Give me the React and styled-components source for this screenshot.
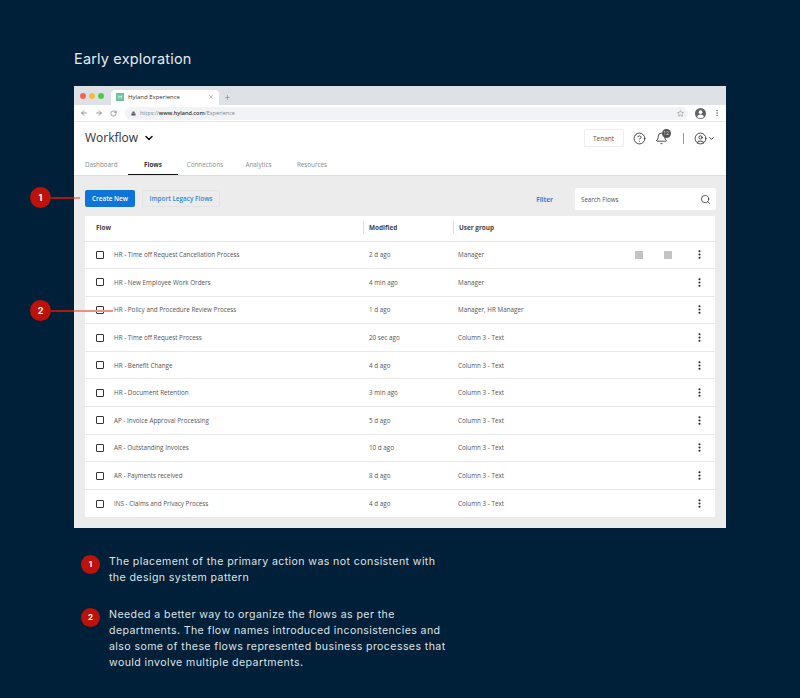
import React from 'react';
import styled, { createGlobalStyle } from 'styled-components';
import { ArrowLeft, ArrowRight, RotateCw, Lock, Star, EllipsisVertical, X, Plus, ChevronDown, CircleHelp, Bell, Search, CircleUser, MoreVertical } from 'lucide-react';

const Global = createGlobalStyle`
  html, body { margin: 0; padding: 0; background: #001f38; }
  body { font-family: "Open Sans", sans-serif; }
  * { box-sizing: border-box; }
`;

const Page = styled.div`
  position: relative;
  width: 800px;
  height: 698px;
  padding: 49px 74px 0;
  background: #001f38;
  overflow: hidden;
`;

const Heading = styled.h1`
  margin: 0 0 17px;
  height: 20px;
  font: 400 14.5px/20px Inter, sans-serif;
  letter-spacing: 0.17px;
  color: #e6eaed;
`;

const Window = styled.div`
  width: 652px;
  height: 442px;
  display: flex;
  flex-direction: column;
  background: #ececec;
`;

const TabStrip = styled.div`
  flex: none;
  height: 19px;
  display: flex;
  align-items: flex-end;
  background: #dee1e6;
  padding-left: 6px;
`;

const Dots = styled.div`
  display: flex;
  gap: 3px;
  align-self: center;
  margin-right: 7px;
`;

const Dot = styled.span`
  width: 6px;
  height: 6px;
  border-radius: 50%;
  background: ${p => p.$color};
`;

const BrowserTab = styled.div`
  width: 108px;
  height: 15.5px;
  display: flex;
  align-items: center;
  padding: 0 5px;
  background: #fff;
  border-radius: 4px 4px 0 0;
  font-size: 6px;
  color: #333;
`;

const Favicon = styled.span`
  width: 8px;
  height: 8px;
  margin-right: 4px;
  background: #6fbf9b;
  color: #fff;
  font-size: 6px;
  line-height: 8px;
  text-align: center;
`;

const TabName = styled.span`
  flex: 1;
`;

const NewTab = styled.span`
  display: flex;
  align-self: center;
  margin: 3px 0 0 5px;
  color: #7d8186;
`;

const AddressBar = styled.div`
  flex: none;
  height: 17px;
  display: flex;
  align-items: center;
  gap: 7px;
  padding: 0 5px 0 6px;
  background: #fff;
  border-bottom: 1px solid #e8e8e8;
  color: #5f6368;
`;

const Url = styled.div`
  flex: 1;
  height: 13px;
  display: flex;
  align-items: center;
  gap: 4px;
  padding: 0 4px 0 6px;
  margin-left: 1px;
  border-radius: 7px;
  background: #f1f3f4;
  font-size: 5.5px;
  color: #80868b;
`;

const UrlText = styled.span`
  flex: 1;
  b { color: #333; font-weight: 600; }
`;

const AppHeader = styled.header`
  flex: none;
  height: 54px;
  padding: 0 11px;
  display: flex;
  flex-direction: column;
  background: #fff;
  border-bottom: 1px solid #dcdcdc;
`;

const TopRow = styled.div`
  height: 32px;
  display: flex;
  align-items: center;
`;

const AppTitle = styled.div`
  display: flex;
  align-items: center;
  gap: 5px;
  flex: 1;
  font: 400 12px/1 "Open Sans", sans-serif;
  color: #333;
`;

const Tenant = styled.div`
  width: 40px;
  height: 18px;
  margin-right: 9px;
  display: flex;
  align-items: center;
  justify-content: center;
  border: 1px solid #eee;
  border-radius: 2px;
  font-size: 6.5px;
  color: #555;
`;

const IconSlot = styled.span`
  position: relative;
  display: flex;
  margin-right: ${p => p.$gap || 0}px;
  color: #222;
`;

const Badge = styled.span`
  position: absolute;
  top: -3px;
  right: -3px;
  width: 9px;
  height: 9px;
  border-radius: 50%;
  background: #555;
  color: #ddd;
  font-size: 5px;
  line-height: 9px;
  text-align: center;
`;

const Divider = styled.span`
  width: 1px;
  height: 11px;
  margin-right: 10px;
  background: #999;
`;

const Tabs = styled.nav`
  margin-top: auto;
  display: flex;
  height: 21px;
`;

const Tab = styled.div`
  width: ${p => p.$w}px;
  display: flex;
  align-items: center;
  justify-content: ${p => (p.$first ? 'flex-start' : 'center')};
  font-size: 6.3px;
  font-weight: ${p => (p.$active ? 700 : 400)};
  color: ${p => (p.$active ? '#333' : '#8b8b8b')};
  border-bottom: 1px solid ${p => (p.$active ? '#111' : 'transparent')};
`;

const Content = styled.main`
  flex: 1;
  padding: 11px 11px 0;
  display: flex;
  flex-direction: column;
`;

const Toolbar = styled.div`
  flex: none;
  height: 22px;
  margin-bottom: 7px;
  display: flex;
  align-items: center;
`;

const Primary = styled.div`
  width: 50px;
  height: 17px;
  margin-right: 7px;
  display: flex;
  align-items: center;
  justify-content: center;
  border-radius: 2px;
  background: #0f74d8;
  color: #fff;
  font-size: 6.4px;
  font-weight: 600;
`;

const Secondary = styled.div`
  width: 78px;
  height: 17px;
  display: flex;
  align-items: center;
  justify-content: center;
  border: 1px solid #e4e4e4;
  border-radius: 2px;
  color: #2f86dd;
  font-size: 6.4px;
  font-weight: 600;
`;

const Filter = styled.div`
  margin-left: auto;
  margin-right: 22px;
  padding-top: 3px;
  color: #2f86dd;
  font-size: 6.4px;
  font-weight: 700;
`;

const SearchBox = styled.div`
  width: 141px;
  height: 22px;
  margin: 2px -1px 0 0;
  display: flex;
  align-items: center;
  justify-content: space-between;
  padding: 0 5px 0 6px;
  background: #fff;
  border-radius: 2px;
  font-size: 6.2px;
  color: #555;
`;

const Table = styled.div`
  background: #fff;
`;

const HeadRow = styled.div`
  height: 25.5px;
  padding-bottom: 1px;
  display: grid;
  grid-template-columns: 278px 90px 1fr;
  align-items: center;
  font-size: 6.4px;
  font-weight: 700;
  color: #444;
  border-bottom: 1px solid #e6e6e6;
`;

const HeadCell = styled.div`
  height: 13px;
  line-height: 13px;
  padding-left: ${p => p.$pad}px;
  border-left: ${p => (p.$line ? '1px solid #ddd' : 'none')};
`;

const Row = styled.div`
  height: 27.6px;
  display: grid;
  grid-template-columns: 29px 250px 89px 1fr 29px 29px 22px;
  align-items: center;
  font-size: 6.3px;
  color: #555;
  border-bottom: ${p => (p.$last ? 'none' : '1px solid #e8e8e8')};
`;

const Check = styled.span`
  width: 8px;
  height: 8px;
  margin-left: 11px;
  border: 1px solid #333;
  border-radius: 1px;
`;

const Cell = styled.span`
  padding-left: ${p => p.$pad || 0}px;
`;

const Placeholder = styled.span`
  width: 8px;
  height: 8px;
  background: ${p => (p.$show ? '#c4c4c4' : 'transparent')};
`;

const Kebab = styled.span`
  display: flex;
  color: #222;
  margin-left: 0.5px;
`;

const Marker = styled.div`
  position: absolute;
  left: 30px;
  top: ${p => p.$top}px;
  width: ${p => p.$len}px;
  height: 21px;
  display: flex;
  align-items: center;
`;

const MarkerDot = styled.span`
  flex: none;
  width: 21px;
  height: 21px;
  border-radius: 50%;
  background: #bd1208;
  color: #fff;
  font: 700 9px/21px Inter, sans-serif;
  text-align: center;
`;

const MarkerLine = styled.span`
  flex: 1;
  height: 2px;
  background: linear-gradient(to right, #a51a12 0, #a51a12 23px, #ee8f88 23px);
`;

const Notes = styled.section`
  margin: 26px 0 0 7px;
  display: flex;
  flex-direction: column;
  gap: 20.5px;
`;

const Note = styled.div`
  display: flex;
  gap: 9px;
`;

const NoteDot = styled.span`
  flex: none;
  width: 19px;
  height: 19px;
  margin-top: 1px;
  border-radius: 50%;
  background: #bd1208;
  color: #fff;
  font: 700 8px/19px Inter, sans-serif;
  text-align: center;
`;

const NoteText = styled.p`
  margin: 0;
  width: 340px;
  font: 400 10.6px/16px Inter, sans-serif;
  letter-spacing: 0.4px;
  color: #dfe3e6;
`;

const rows = [
  ['HR - Time off Request Cancellation Process', '2 d ago', 'Manager'],
  ['HR - New Employee Work Orders', '4 min ago', 'Manager'],
  ['HR - Policy and Procedure Review Process', '1 d ago', 'Manager, HR Manager'],
  ['HR - Time off Request Process', '20 sec ago', 'Column 3 - Text'],
  ['HR - Benefit Change', '4 d ago', 'Column 3 - Text'],
  ['HR - Document Retention', '3 min ago', 'Column 3 - Text'],
  ['AP - Invoice Approval Processing', '5 d ago', 'Column 3 - Text'],
  ['AR - Outstanding Invoices', '10 d ago', 'Column 3 - Text'],
  ['AR - Payments received', '8 d ago', 'Column 3 - Text'],
  ['INS - Claims and Privacy Process', '4 d ago', 'Column 3 - Text'],
];

const tabs = [
  ['Dashboard', 43],
  ['Flows', 50],
  ['Connections', 54],
  ['Analytics', 53],
  ['Resources', 54],
];

// chrome's filled profile avatar
function ProfileIcon() {
  return (
    <svg width="11" height="11" viewBox="0 0 24 24">
      <circle cx="12" cy="12" r="12" fill="#5f6368" />
      <circle cx="12" cy="9" r="4" fill="#fff" />
      <path d="M4.5 19c1.5-3.5 4.500-5 7.500-5s6 1.500 7.500 5a11 11 0 0 1-15 0z" fill="#fff" />
    </svg>
  );
}

export default function App() {
  return (
    <Page>
      <Global />
      <Heading>Early exploration</Heading>
      <Window>
        <TabStrip>
          <Dots>
            <Dot $color="#f4605a" />
            <Dot $color="#f6bd3a" />
            <Dot $color="#4fc84a" />
          </Dots>
          <BrowserTab>
            <Favicon>H</Favicon>
            <TabName>Hyland Experience</TabName>
            <X size={6} color="#777" />
          </BrowserTab>
          <NewTab><Plus size={7} /></NewTab>
        </TabStrip>
        <AddressBar>
          <ArrowLeft size={8} />
          <ArrowRight size={8} />
          <RotateCw size={7} />
          <Url>
            <Lock size={5} fill="#5f6368" />
            <UrlText>https://<b>www.hyland.com</b>/Experience</UrlText>
            <Star size={7} />
          </Url>
          <ProfileIcon />
          <EllipsisVertical size={8} />
        </AddressBar>
        <AppHeader>
          <TopRow>
            <AppTitle>
              Workflow
              <ChevronDown size={12} strokeWidth={3} color="#111" />
            </AppTitle>
            <Tenant>Tenant</Tenant>
            <IconSlot $gap={9}><CircleHelp size={13} strokeWidth={1.5} /></IconSlot>
            <IconSlot $gap={15}>
              <Bell size={13} strokeWidth={1.5} />
              <Badge>12</Badge>
            </IconSlot>
            <Divider />
            <IconSlot $gap={1.5}><CircleUser size={13} strokeWidth={1.5} /></IconSlot>
            <IconSlot><ChevronDown size={7} strokeWidth={3} /></IconSlot>
          </TopRow>
          <Tabs>
            {tabs.map(([label, w], i) => (
              <Tab key={label} $w={w} $first={i === 0} $active={label === 'Flows'}>{label}</Tab>
            ))}
          </Tabs>
        </AppHeader>
        <Content>
          <Toolbar>
            <Primary>Create New</Primary>
            <Secondary>Import Legacy Flows</Secondary>
            <Filter>Filter</Filter>
            <SearchBox>
              Search Flows
              <Search size={11} strokeWidth={1.5} color="#222" />
            </SearchBox>
          </Toolbar>
          <Table>
            <HeadRow>
              <HeadCell $pad={11}>Flow</HeadCell>
              <HeadCell $pad={5} $line>Modified</HeadCell>
              <HeadCell $pad={5} $line>User group</HeadCell>
            </HeadRow>
            {rows.map(([flow, modified, group], i) => (
              <Row key={flow} $last={i === rows.length - 1}>
                <Check />
                <Cell>{flow}</Cell>
                <Cell $pad={5}>{modified}</Cell>
                <Cell $pad={5}>{group}</Cell>
                <Placeholder $show={i === 0} />
                <Placeholder $show={i === 0} />
                <Kebab><MoreVertical size={11} strokeWidth={2.5} /></Kebab>
              </Row>
            ))}
          </Table>
        </Content>
      </Window>
      <Marker $top={187} $len={50}>
        <MarkerDot>1</MarkerDot>
        <MarkerLine />
      </Marker>
      <Marker $top={300} $len={83}>
        <MarkerDot>2</MarkerDot>
        <MarkerLine />
      </Marker>
      <Notes>
        <Note>
          <NoteDot>1</NoteDot>
          <NoteText>The placement of the primary action was not consistent with the design system pattern</NoteText>
        </Note>
        <Note>
          <NoteDot>2</NoteDot>
          <NoteText>Needed a better way to organize the flows as per the departments. The flow names introduced inconsistencies and also some of these flows represented business processes that would involve multiple departments.</NoteText>
        </Note>
      </Notes>
    </Page>
  );
}
